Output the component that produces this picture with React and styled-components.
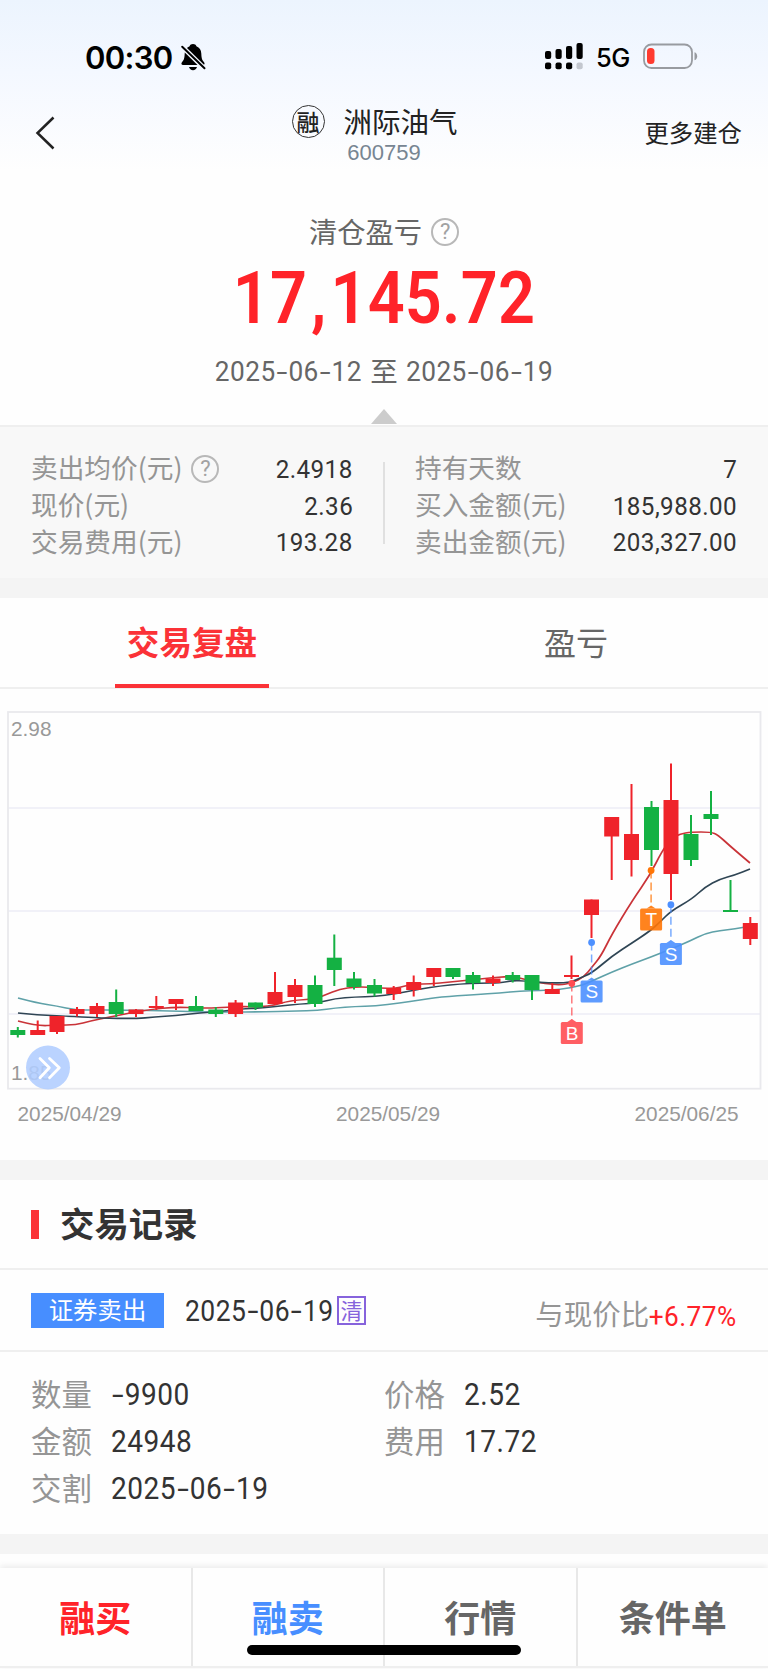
import React from 'react'
import styled, { createGlobalStyle } from 'styled-components'

const colors = {
    red: "#fb3237",
    brightRed: "#ff2329",
    blue: "#478eff",
    purple: "#8663dc",
    dark: "#333",
    text: "#666",
    label: "#959595",
    up: "#ef232a",
    down: "#14b143",
    line: "#efefef",
    band: "#f4f4f4",
}

const cjk = '"Noto Sans CJK SC", sans-serif'
const din = 'Roboto, "Noto Sans CJK SC", sans-serif'
const arial = '"Liberation Sans", Arial, sans-serif'

// x, body top, body bottom, wick top, wick bottom, up
const candles = [
    [17.8, 1030, 1035, 1027, 1037.5, 0],
    [37.7, 1030, 1035, 1020.5, 1035, 1],
    [57, 1016, 1032, 1016, 1034, 1],
    [77, 1009, 1014, 1007, 1016.5, 1],
    [97, 1006, 1014, 1003, 1017, 1],
    [116.2, 1002, 1014, 989.5, 1017, 0],
    [136, 1009.5, 1014, 1009, 1017, 1],
    [156.3, 1006, 1008, 996, 1010, 1],
    [176, 999, 1004, 999, 1010, 1],
    [196, 1006, 1011, 996, 1011, 0],
    [215.8, 1009.5, 1014, 1007, 1017, 0],
    [235.6, 1002.5, 1014, 1000, 1017, 1],
    [255.5, 1002.5, 1007.5, 1002.5, 1010, 0],
    [275, 992, 1004, 972, 1005, 1],
    [295, 985, 997, 979, 1003, 1],
    [315, 985, 1004, 975.5, 1007, 0],
    [334.3, 957.7, 970, 934.5, 986, 0],
    [354, 978.5, 987, 972, 989.5, 0],
    [374.5, 985, 993.5, 979, 996.5, 0],
    [393.7, 988, 994, 986, 1000, 1],
    [413.7, 982, 990, 975.5, 996.5, 1],
    [433.8, 968, 977, 968, 986, 1],
    [453, 968, 977, 968, 979, 0],
    [473, 975, 983, 972, 989.5, 0],
    [493, 978.5, 983, 975.5, 986, 1],
    [512.7, 975, 980, 972, 982.5, 0],
    [532, 975, 990, 975, 1000, 0],
    [552.3, 989, 994, 983, 994, 1],
    [571.5, 975, 977, 955.5, 979, 1],
    [591.5, 899.5, 915, 899.5, 938, 1],
    [611.7, 817, 836.5, 817, 880, 1],
    [631.5, 834, 860, 784, 876.5, 1],
    [651.5, 807, 850, 801, 866, 0],
    [671, 800, 874, 763.5, 900, 1],
    [691, 834, 860, 815, 866, 0],
    [711, 814, 819, 791, 835, 0],
    [730.5, 910, 912, 880, 911, 0],
    [750.3, 923, 939, 917, 945, 1],
]

const averages = [
    {
        color: "#5fa1a8",
        points: [[18, 998], [37, 1003], [57, 1006], [75, 1010], [95, 1010], [115, 1010], [160, 1010.5], [200, 1012], [230, 1012], [260, 1012], [295, 1011], [318, 1010.5], [335, 1008], [355, 1006.5], [375, 1006], [400, 1003], [420, 1000], [440, 997], [475, 994.5], [500, 993], [520, 991], [540, 990.5], [560, 989.5], [580, 986], [592, 981], [612, 972], [632, 964], [651, 957], [671, 949], [690, 941], [705, 933.5], [720, 930.5], [735, 929], [750, 926]],
    },
    {
        color: "#c93338",
        points: [[18, 1021], [37, 1026], [57, 1025], [76, 1025], [90, 1021], [110, 1017], [130, 1013], [150, 1009.5], [175, 1007], [200, 1008], [215, 1008], [240, 1006.5], [260, 1007], [275, 1005], [285, 1002], [297, 1000], [315, 999], [325, 995], [340, 989], [355, 987], [368, 987], [380, 988], [395, 988.5], [405, 986], [415, 984], [430, 984], [450, 982], [470, 980], [490, 978], [507, 976.5], [517, 977], [530, 981], [545, 983.5], [560, 985], [572, 983], [584, 977], [592, 967], [601, 956], [612, 934], [632, 901], [650, 875], [662, 851], [672, 838], [680, 834], [691, 832], [711, 832], [718, 835], [730, 846], [750, 863]],
    },
    {
        color: "#2f4554",
        points: [[18, 1013], [37, 1015], [76, 1016.5], [100, 1018], [135, 1018.7], [155, 1017], [175, 1015.5], [200, 1013], [225, 1011], [240, 1009], [262, 1008], [280, 1006], [300, 1004], [318, 1003], [335, 998.5], [355, 997], [375, 996.5], [395, 994], [420, 989], [440, 986], [460, 984], [480, 983], [500, 983], [513, 980.5], [525, 981], [540, 982.5], [557, 983], [570, 982.5], [580, 978], [592, 973], [612, 956], [632, 943], [650, 931], [660, 922], [671, 911], [692, 899], [705, 887], [720, 879], [735, 875], [750, 869]],
    },
]

const markers = [
    { letter: "B", x: 571.8, dot: 983.5, top: 1022, color: "#ff4d52" },
    { letter: "S", x: 591.6, dot: 942.5, top: 980.5, color: "#4d90ff" },
    { letter: "T", x: 651.1, dot: 870.5, top: 908.5, color: "#ff7505" },
    { letter: "S", x: 670.9, dot: 904.7, top: 943, color: "#4d90ff" },
]

const leftStats = [
    { label: "卖出均价(元)", value: "2.4918", help: true },
    { label: "现价(元)", value: "2.36" },
    { label: "交易费用(元)", value: "193.28" },
]

const rightStats = [
    { label: "持有天数", value: "7" },
    { label: "买入金额(元)", value: "185,988.00" },
    { label: "卖出金额(元)", value: "203,327.00" },
]

const record = [
    ["数量", "-9900"],
    ["价格", "2.52"],
    ["金额", "24948"],
    ["费用", "17.72"],
    ["交割", "2025-06-19"],
]

const actions = [
    { label: "融买", color: colors.brightRed },
    { label: "融卖", color: colors.blue },
    { label: "行情", color: colors.text },
    { label: "条件单", color: colors.text },
]

// smooth curve through the points, midpoints as anchors
function toPath(points) {
    let d = `M${points[0][0]} ${points[0][1]}`
    for (let i = 1; i < points.length - 1; i++) {
        const [x, y] = points[i]
        const [nx, ny] = points[i + 1]
        d += ` Q${x} ${y} ${(x + nx) / 2} ${(y + ny) / 2}`
    }
    const last = points[points.length - 1]
    return `${d} L${last[0]} ${last[1]}`
}

// condensed digits, with a wider hyphen than the one of the font
const Num = ({ children, origin }) => (
    <Condensed origin={origin}>
        {children.split(/(-)/).map((part, index) => (
            part === "-" ? <Dash key={index}>-</Dash> : part
        ))}
    </Condensed>
)

const BellOff = () => (
    <svg width="26" height="28" viewBox="0 0 26 28">
        <path d="M13 1c1.700 0 3 0.900 3.400 2.300 3.200 1.200 4.700 3.900 4.900 7.200 0.200 5 0.800 6.500 2.600 8.500 1.200 1.400 0.800 3-1 3H3.100c-1.800 0-2.200-1.600-1-3 1.800-2 2.400-3.500 2.600-8.500 0.200-3.300 1.700-6 4.900-7.200C10 1.900 11.300 1 13 1zM9 24h8c-0.500 2-2 3.200-4 3.200S9.500 26 9 24z" fill="#000" />
        <path d="M0.500 2L26 27" stroke="#f4f8ff" strokeWidth="4.800" />
        <path d="M2.200 3.700L24.500 25.300" stroke="#000" strokeWidth="2" strokeLinecap="round" />
    </svg>
)

const Signal = () => (
    <svg width="38" height="27" viewBox="0 0 38 27">
        {[8, 6, 3, 0].map((y, i) => (
            <g key={y}>
                <rect x={i * 10.5} y={y} width="6.200" height={16 - y} rx="2" fill="#000" />
                <rect x={i * 10.5} y="19.500" width="6.200" height="6.700" rx="2" fill={i === 3 ? "#c3c7cf" : "#000"} />
            </g>
        ))}
    </svg>
)

const Battery = () => (
    <svg width="55" height="26" viewBox="0 0 55 26">
        <rect x="1" y="1.500" width="48" height="23.500" rx="7.500" fill="none" stroke="#989ba0" strokeWidth="1.800" />
        <rect x="4" y="5" width="7.500" height="16" rx="3.500" fill="#ff3b30" />
        <path d="M51.500 9.300c1.800 0.600 2.700 2.100 2.700 4s-0.900 3.400-2.700 4z" fill="#989ba0" />
    </svg>
)

const Help = () => (
    <HelpCircle>?</HelpCircle>
)

const Chart = () => (
    <ChartSvg width="768" height="471" viewBox="0 689 768 471">
        {[808, 911, 1014].map(y => (
            <line key={y} x1="8" x2="760" y1={y} y2={y} stroke="#f1f1f8" strokeWidth="2" />
        ))}
        <rect x="8" y="712" width="752.500" height="376.700" fill="none" stroke="#e9e9ed" strokeWidth="1.800" />
        {averages.map(({ color, points }) => (
            <path key={color} d={toPath(points)} fill="none" stroke={color} strokeWidth="1.700" />
        ))}
        {candles.map(([x, top, bottom, high, low, up]) => (
            <g key={x} fill={up ? colors.up : colors.down}>
                <rect x={x - 1} y={high} width="2" height={low - high} />
                <rect x={x - 7.5} y={top} width="15" height={bottom - top} />
            </g>
        ))}
        {markers.map(({ letter, x, dot, top, color }) => (
            <g key={letter + x}>
                <line x1={x} x2={x} y1={dot} y2={top - 2} stroke={color} strokeWidth="1.500" strokeDasharray="8 4" opacity="0.750" />
                <circle cx={x} cy={dot} r="3.400" fill={color} />
                <path d={`M${x - 4.5} ${top}L${x} ${top - 3}L${x + 4.5} ${top}z`} fill={color} opacity="0.900" />
                <rect x={x - 11} y={top} width="22" height="22" rx="1.500" fill={color} opacity="0.900" />
                <MarkerText x={x + 0.3} y={top + 17.8}>{letter}</MarkerText>
            </g>
        ))}
        <AxisText x="11" y="736">2.98</AxisText>
        <AxisText x="11" y="1080">1.85</AxisText>
        <circle cx="48" cy="1067.500" r="22" fill="#b0cdff" opacity="0.880" />
        <path d="M40 1058.500l9.300 9.300-9.300 10M49.500 1058.500l9.800 9.300-9.800 10" fill="none" stroke="#fff" strokeWidth="2.800" strokeLinecap="round" strokeLinejoin="round" />
        <AxisText x="17.500" y="1120.500">2025/04/29</AxisText>
        <AxisText x="336" y="1120.500">2025/05/29</AxisText>
        <AxisText x="634.500" y="1120.500">2025/06/25</AxisText>
    </ChartSvg>
)

const StatList = ({ items }) => (
    <StatColumn>
        {items.map(({ label, value, help }) => (
            <Stat key={label}>
                <StatLabel>{label}{help && <Help />}</StatLabel>
                <StatValue><Num origin="right">{value}</Num></StatValue>
            </Stat>
        ))}
    </StatColumn>
)

export default function App() {
    return (
        <Page>
            <GlobalStyle />
            <Top>
                <StatusBar>
                    <StatusSide>
                        <Clock>00:30</Clock>
                        <BellOff />
                    </StatusSide>
                    <StatusSide>
                        <Signal />
                        <Network>5G</Network>
                        <Battery />
                    </StatusSide>
                </StatusBar>
                <Header>
                    <BackIcon width="22" height="34" viewBox="0 0 22 34">
                        <path d="M18.500 1.500L2.500 17l16 15.500" fill="none" stroke="#222" strokeWidth="2.500" />
                    </BackIcon>
                    <Stock>
                        <StockName><Margin>融</Margin>洲际油气</StockName>
                        <Code>600759</Code>
                    </Stock>
                    <More>更多建仓</More>
                </Header>
            </Top>
            <Summary>
                <SummaryTitle>清仓盈亏<Help /></SummaryTitle>
                <Profit>17<Comma>,</Comma>145.72</Profit>
                <Period>
                    <Num origin="right">2025-06-12</Num>
                    <To>至</To>
                    <Num origin="left">2025-06-19</Num>
                </Period>
                <Triangle />
            </Summary>
            <Stats>
                <StatList items={leftStats} />
                <Divider />
                <StatList items={rightStats} />
            </Stats>
            <Band />
            <Tabs>
                <Tab selected>交易复盘</Tab>
                <Tab>盈亏</Tab>
            </Tabs>
            <Chart />
            <Band />
            <SectionTitle><Bar />交易记录</SectionTitle>
            <RecordHead>
                <Tag>证券卖出</Tag>
                <RecordDate><Num>2025-06-19</Num></RecordDate>
                <Cleared>清</Cleared>
                <Compare>与现价比<Change><Num origin="right">+6.77%</Num></Change></Compare>
            </RecordHead>
            <Record>
                {record.map(([label, value]) => (
                    <Field key={label}>
                        <FieldLabel>{label}</FieldLabel>
                        <FieldValue><Num>{value}</Num></FieldValue>
                    </Field>
                ))}
            </Record>
            <Band />
            <Footer>
                {actions.map(({ label, color }) => (
                    <Action key={label} color={color}>{label}</Action>
                ))}
                <HomeBar />
            </Footer>
        </Page>
    )
}

const GlobalStyle = createGlobalStyle`
    * {
        box-sizing: border-box;
    }
    body {
        margin: 0;
        background-color: #fff;
    }
    svg {
        display: block;
        flex: none;
    }
`
const Page = styled.div`
    display: flex;
    flex-direction: column;
    width: 768px;
    height: 1669px;
    overflow: hidden;
    background-color: #fefefe;
    font-family: ${cjk};
    white-space: nowrap;
`
const Condensed = styled.span`
    display: inline-block;
    font-family: ${din};
    letter-spacing: 0.018em;
    transform: scaleX(0.92);
    transform-origin: ${({origin}) => origin ?? "left"};
`
const Dash = styled.span`
    display: inline-block;
    padding: 0 0.105em;
    letter-spacing: 0;
    transform: scaleX(1.5);
`
const Top = styled.div`
    height: 180px;
    background: linear-gradient(#ecf4fe, #f4f8ff 40%, #fefefe 95%);
`
const StatusBar = styled.div`
    display: flex;
    justify-content: space-between;
    height: 90px;
    padding: 43px 70px 0 85px;
`
const StatusSide = styled.div`
    display: flex;
    align-items: flex-start;
    font-family: Inter, sans-serif;
    color: #000;
`
const Clock = styled.span`
    width: 95px;
    margin-top: -1px;
    font-size: 31px;
    font-weight: 600;
    line-height: 31px;
    letter-spacing: -0.700px;
`
const Network = styled.span`
    width: 47px;
    margin: 1px 0 0 13px;
    font-size: 25.500px;
    font-weight: 500;
    line-height: 27px;
    letter-spacing: -0.500px;
`
const Header = styled.div`
    display: grid;
    grid-template-columns: 1fr auto 1fr;
    align-items: center;
    height: 84px;
    padding: 0 26px;
    color: #222;
`
const BackIcon = styled.svg`
    margin: 2px 0 0 9px;
`
const Stock = styled.div`
    display: flex;
    flex-direction: column;
    align-items: center;
    width: 190px;
    padding-top: 7px;
`
const StockName = styled.div`
    display: flex;
    align-items: center;
    align-self: flex-start;
    height: 33px;
    margin-left: 2.500px;
    font-size: 28.500px;
    line-height: 30px;
`
const Margin = styled.span`
    display: flex;
    align-items: center;
    justify-content: center;
    width: 33px;
    height: 33px;
    margin-right: 19px;
    border: 1.500px solid #333;
    border-radius: 50%;
    font-size: 23px;
    font-weight: 500;
    line-height: 28px;
`
const Code = styled.div`
    font-family: ${arial};
    font-size: 22px;
    line-height: 29px;
    color: #778592;
`
const More = styled.div`
    justify-self: end;
    padding-bottom: 1px;
    font-size: 24.400px;
`
const Summary = styled.div`
    display: flex;
    flex-direction: column;
    align-items: center;
    height: 247px;
    padding-top: 30px;
    border-bottom: 2px solid ${colors.line};
    color: ${colors.text};
`
const HelpCircle = styled.span`
    display: flex;
    align-items: center;
    justify-content: center;
    width: 28px;
    height: 28px;
    margin: 3px 0 0 9px;
    border: 2px solid #b8b8b8;
    border-radius: 50%;
    font-family: ${din};
    font-size: 22px;
    line-height: 24px;
    color: #a2a2a2;
`
const SummaryTitle = styled.div`
    display: flex;
    align-items: center;
    height: 40px;
    font-size: 28.300px;
`
const Profit = styled.div`
    margin-top: 11px;
    font-family: ${din};
    font-size: 72px;
    font-weight: 600;
    line-height: 76px;
    letter-spacing: 0.003em;
    color: ${colors.brightRed};
    transform: scaleX(0.9);
`
const Comma = styled.span`
    padding: 0 0.060em;
`
const Period = styled.div`
    display: flex;
    align-items: center;
    height: 36px;
    margin-top: 16px;
    font-size: 28.500px;
`
const To = styled.span`
    margin: -3px 8px 0;
    font-size: 27.500px;
`
const Triangle = styled.div`
    margin-top: 20px;
    border: 13px solid transparent;
    border-top: 0;
    border-bottom: 15px solid #ccc;
`
const Stats = styled.div`
    display: flex;
    justify-content: space-between;
    height: 151px;
    padding: 24px 32px 0 31px;
    background-color: #f8f8f8;
`
const StatColumn = styled.div`
    width: 321px;
`
const Stat = styled.div`
    display: flex;
    justify-content: space-between;
    height: 36.700px;
    line-height: 36.700px;
`
const StatLabel = styled.div`
    display: flex;
    align-items: center;
    margin-top: -3px;
    font-size: 26.700px;
    color: ${colors.label};
`
const StatValue = styled.div`
    margin: -2px -1px 0 0;
    font-size: 26.300px;
    color: ${colors.dark};
`
const Divider = styled.div`
    width: 2px;
    height: 82px;
    margin-top: 11px;
    background-color: #e0e0e0;
`
const Band = styled.div`
    flex: none;
    height: 20px;
    background-color: ${colors.band};
`
const Tabs = styled.div`
    display: flex;
    justify-content: space-around;
    height: 91px;
    border-bottom: 2px solid ${colors.line};
`
const Tab = styled.div`
    width: 154px;
    height: 90px;
    border-bottom: 4px solid ${({selected}) => selected ? colors.red : "transparent"};
    font-size: ${({selected}) => selected ? "32.600px" : "32px"};
    font-weight: ${({selected}) => selected ? "bold" : "normal"};
    line-height: 86px;
    text-align: center;
    color: ${({selected}) => selected ? colors.red : colors.text};
`
const ChartSvg = styled.svg`
    font-family: ${arial};
`
const AxisText = styled.text`
    font-size: 20.800px;
    fill: #999;
`
const MarkerText = styled.text`
    font-size: 19px;
    text-anchor: middle;
    fill: #fff;
`
const SectionTitle = styled.div`
    display: flex;
    align-items: center;
    height: 90px;
    padding: 0 31px 4px;
    border-bottom: 2px solid ${colors.line};
    font-size: 34.400px;
    font-weight: bold;
    color: ${colors.dark};
`
const Bar = styled.span`
    width: 8px;
    height: 29px;
    margin: 4px 21px 0 0;
    background-color: ${colors.red};
`
const RecordHead = styled.div`
    display: flex;
    align-items: center;
    height: 82px;
    padding: 0 32px 0 31px;
    border-bottom: 2px solid ${colors.line};
`
const Tag = styled.div`
    width: 133px;
    height: 35px;
    background-color: ${colors.blue};
    font-size: 24.400px;
    line-height: 31px;
    text-align: center;
    color: #fff;
`
const RecordDate = styled.div`
    width: 152px;
    margin: -3px 0 0 21px;
    font-size: 28.800px;
    color: ${colors.dark};
`
const Cleared = styled.div`
    width: 29px;
    height: 29px;
    border: 2px solid ${colors.purple};
    font-size: 22px;
    line-height: 23px;
    text-align: center;
    color: ${colors.purple};
`
const Compare = styled.div`
    display: flex;
    align-items: center;
    margin: 4px -1px 0 auto;
    font-size: 28.500px;
    color: ${colors.label};
`
const Change = styled.span`
    margin: 2px 0 0 -8px;
    color: ${colors.brightRed};
`
const Record = styled.div`
    display: grid;
    grid-template-columns: 353px 1fr;
    grid-auto-rows: 47px;
    height: 182px;
    padding: 20px 31px 0;
`
const Field = styled.div`
    display: flex;
    align-items: center;
    line-height: 47px;
`
const FieldLabel = styled.div`
    width: 80px;
    margin-top: -4px;
    font-size: 30.400px;
    color: ${colors.label};
`
const FieldValue = styled.div`
    margin-top: -4px;
    font-size: 30.500px;
    color: ${colors.dark};
`
const Footer = styled.div`
    position: relative;
    display: flex;
    height: 100px;
    margin-top: 14px;
    border-bottom: 2px solid ${colors.line};
    box-shadow: 0 -2px 6px rgba(0, 0, 0, 0.080);
`
const Action = styled.div`
    flex: 1;
    font-size: 36px;
    font-weight: 700;
    line-height: 97px;
    text-align: center;
    color: ${({color}) => color};

    & + & {
        border-left: 2px solid #e8e8e8;
    }
`
const HomeBar = styled.div`
    position: absolute;
    left: 247px;
    bottom: 11px;
    width: 274px;
    height: 10px;
    border-radius: 5px;
    background-color: #000;
`
